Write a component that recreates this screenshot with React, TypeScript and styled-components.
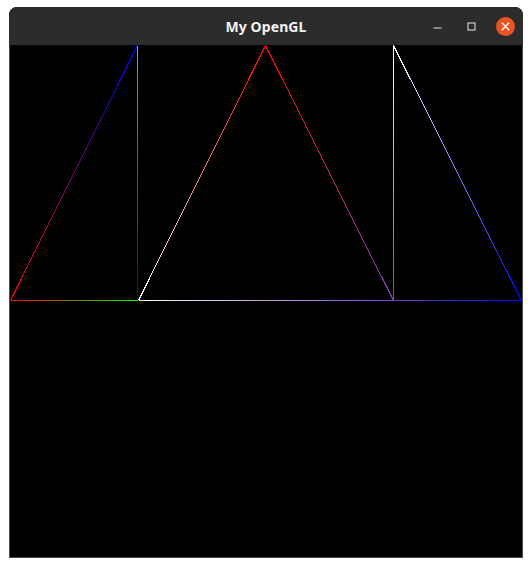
import React from "react";
import styled, { createGlobalStyle } from "styled-components";

const Global = createGlobalStyle`
  html, body { margin: 0; padding: 0; background: #ffffff; }
  body { padding: 7px 9px; font-family: "Noto Sans", "Open Sans", sans-serif; }
`;

const Window = styled.div`
  width: 514px;
  display: flex;
  flex-direction: column;
  border-radius: 8px 8px 0 0;
  overflow: hidden;
  background: #2c2c2c;
`;

const TitleBar = styled.div`
  height: 38px;
  position: relative;
  display: flex;
  align-items: center;
  justify-content: center;
  background: #2c2c2c;
`;

const Title = styled.div`
  color: #f2f2f2;
  font-weight: 700;
  font-size: 14px;
  letter-spacing: 0.1px;
`;

const Controls = styled.div`
  position: absolute;
  right: 8px;
  top: 0;
  height: 38px;
  display: flex;
  align-items: center;
  gap: 15px;
`;

const CtlButton = styled.div<{ $close?: boolean }>`
  width: 19px;
  height: 19px;
  border-radius: 50%;
  display: flex;
  align-items: center;
  justify-content: center;
  background: ${(p) => (p.$close ? "#e95420" : "transparent")};
`;

const CanvasFrame = styled.div`
  border: 1px solid #4a4a4a;
  border-top: none;
  background: #000;
  width: 512px;
  height: 512px;
`;

const Scene = styled.svg`
  display: block;
`;

type Seg = { x1: number; y1: number; x2: number; y2: number; c1: string; c2: string };

const RED = "#ff0000";
const GREEN = "#00ff00";
const BLUE = "#0000ff";
const WHITE = "#ffffff";
const PURPLE = "#8040c0";

const L = 0.5, A = 127.5, B = 255.5, C = 383.5, R = 511.5;
const T = 0.5, M = 255.5;

const segs: Seg[] = [
  { x1: L, y1: M, x2: A, y2: T, c1: RED, c2: BLUE },
  { x1: A, y1: T, x2: A, y2: M, c1: GREEN, c2: BLUE },
  { x1: L, y1: M, x2: A, y2: M, c1: RED, c2: GREEN },
  { x1: A + 1, y1: M, x2: B, y2: T, c1: WHITE, c2: RED },
  { x1: B, y1: T, x2: C, y2: M, c1: RED, c2: PURPLE },
  { x1: A + 1, y1: M, x2: C, y2: M, c1: WHITE, c2: PURPLE },
  { x1: C, y1: T, x2: C, y2: M, c1: WHITE, c2: PURPLE },
  { x1: C, y1: T, x2: R, y2: M, c1: WHITE, c2: BLUE },
  { x1: C, y1: M, x2: R, y2: M, c1: PURPLE, c2: BLUE },
];

export default function App() {
  return (
    <>
      <Global />
      <Window>
        <TitleBar>
          <Title>My OpenGL</Title>
          <Controls>
            <CtlButton>
              <svg width="19" height="19" viewBox="0 0 19 19">
                <rect x="5.5" y="10.5" width="8" height="1" fill="#e8e8e8" />
              </svg>
            </CtlButton>
            <CtlButton>
              <svg width="19" height="19" viewBox="0 0 19 19">
                <rect x="6" y="6" width="7" height="7" fill="none" stroke="#e8e8e8" strokeWidth="1" />
              </svg>
            </CtlButton>
            <CtlButton $close>
              <svg width="19" height="19" viewBox="0 0 19 19">
                <path d="M6.3 6.3 L12.7 12.7 M12.7 6.3 L6.3 12.7" stroke="#ffffff" strokeWidth="1.4" strokeLinecap="round" />
              </svg>
            </CtlButton>
          </Controls>
        </TitleBar>
        <CanvasFrame>
          <Scene width="512" height="512" viewBox="0 0 512 512" shapeRendering="crispEdges">
            <defs>
              {segs.map((s, i) => (
                <linearGradient
                  key={i}
                  id={`g${i}`}
                  gradientUnits="userSpaceOnUse"
                  x1={s.x1}
                  y1={s.y1}
                  x2={s.x2 + (s.x1 === s.x2 ? 0.001 : 0)}
                  y2={s.y2 + (s.y1 === s.y2 ? 0.001 : 0)}
                >
                  <stop offset="0" stopColor={s.c1} />
                  <stop offset="1" stopColor={s.c2} />
                </linearGradient>
              ))}
            </defs>
            {segs.map((s, i) => (
              <line
                key={i}
                x1={s.x1}
                y1={s.y1}
                x2={s.x2}
                y2={s.y2}
                stroke={`url(#g${i})`}
                strokeWidth="1"
              />
            ))}
          </Scene>
        </CanvasFrame>
      </Window>
    </>
  );
}
